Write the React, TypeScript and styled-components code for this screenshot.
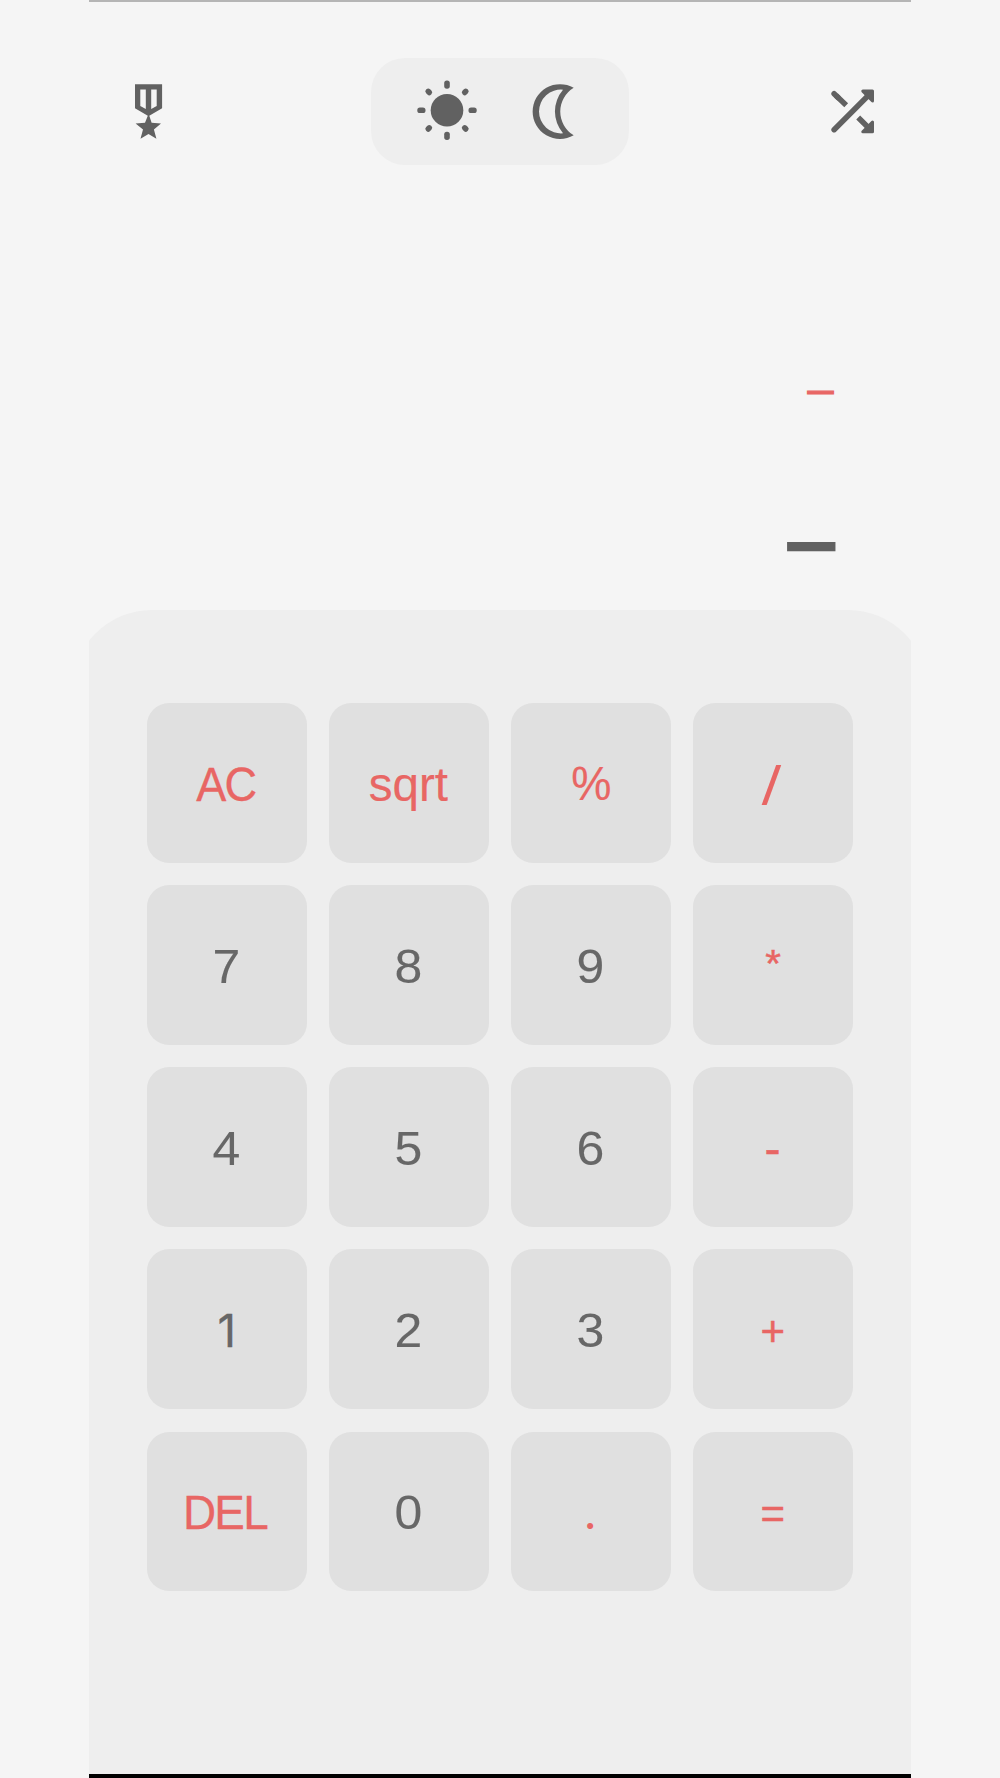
import React from "react";
import styled, { createGlobalStyle } from "styled-components";

const ink = "#616161";
const accent = "#e86664";

const GlobalStyle = createGlobalStyle`
  * { box-sizing: border-box; }
  body {
    margin: 0;
    background: #f5f5f5;
    font-family: "Liberation Sans", Arial, sans-serif;
  }
`;

const Phone = styled.main`
  width: 821.4px;
  height: 1778px;
  margin: 0 auto;
  display: flex;
  flex-direction: column;
  overflow: hidden;
  border-top: 2px solid #b5b5b5;
  border-bottom: 4px solid #000;
`;

const TopBar = styled.header`
  height: 163px;
  padding: 56px 35.9px 0 45.7px;
  display: flex;
  align-items: flex-start;
  justify-content: space-between;
`;

const IconButton = styled.button`
  border: 0;
  padding: 26px 0 0;
  background: none;
  display: flex;
`;

const ThemeSwitch = styled.div`
  width: 258px;
  height: 107px;
  margin-left: 6.2px;
  padding: 22px 44.6px 0 46px;
  border-radius: 34px;
  background: #eeeeee;
  display: flex;
  justify-content: space-between;
`;

const Icon = styled.svg`
  display: block;
  fill: ${ink};
`;

const Display = styled.section`
  height: 445px;
  padding-right: 75.7px;
  display: flex;
  flex-direction: column;
  align-items: flex-end;
`;

const Expression = styled.div`
  height: 60px;
  margin: 174.9px 2px 0 0;
  font-size: 44.5px;
  line-height: 60px;
  color: ${accent};
  -webkit-text-stroke: 1.2px ${accent};
`;

const Result = styled.div`
  height: 90px;
  margin: 69.2px 3.4px 0 0;
  font-size: 73px;
  font-weight: 700;
  line-height: 90px;
  color: ${ink};
  -webkit-text-stroke: 6.4px ${ink};
`;

const Panel = styled.section`
  flex: 1;
  margin: 0 -17px;
  padding: 93.2px 74.9px 0;
  border-radius: 80px 80px 0 0;
  background: #eeeeee;
`;

const Keypad = styled.div`
  display: grid;
  grid-template-columns: repeat(4, 159.6px);
  grid-auto-rows: 159.6px;
  gap: 22.5px;
`;

const Key = styled.button<{ $accent: boolean }>`
  border: 0;
  padding: 3px 0 0;
  border-radius: 22px;
  background: #e0e0e0;
  color: ${(p) => (p.$accent ? accent : "#676767")};
  display: flex;
  align-items: center;
  justify-content: center;
`;

type LabelStyle = {
  size?: number;
  family?: string;
  track?: number;
  x?: number;
  y?: number;
  sx?: number;
  sy?: number;
  bold?: number;
};

const Label = styled.span<{ $s: LabelStyle }>`
  font-family: ${(p) => p.$s.family ?? '"Liberation Sans"'}, Arial, sans-serif;
  font-size: ${(p) => p.$s.size ?? 48}px;
  letter-spacing: ${(p) => p.$s.track ?? 0}px;
  margin-right: ${(p) => -(p.$s.track ?? 0)}px;
  line-height: 56px;
  -webkit-text-stroke: ${(p) => p.$s.bold ?? 0}px currentColor;
  transform: translate(${(p) => p.$s.x ?? 0}px, ${(p) => p.$s.y ?? 0}px)
    scale(${(p) => p.$s.sx ?? 1}, ${(p) => p.$s.sy ?? 1});
`;

const digit: LabelStyle = { sx: 1.04, x: -0.9, bold: 0.1 };

const keys: { text: string; accent?: boolean; s: LabelStyle }[] = [
  { text: "AC", accent: true, s: { track: -2, sx: 0.94, x: -0.6, y: 0.7, bold: 0.3 } },
  { text: "sqrt", accent: true, s: { x: -0.6, y: 0.5, sx: 0.99, bold: 0.2 } },
  { text: "%", accent: true, s: { sx: 0.94, y: 0.4, bold: 0.2 } },
  { text: "/", accent: true, s: { family: "Inter", size: 46, sx: 1.35, x: -1.8, y: -0.8 } },
  { text: "7", s: digit },
  { text: "8", s: digit },
  { text: "9", s: digit },
  { text: "*", accent: true, s: { size: 42, sx: 0.96, sy: 0.92, bold: 0.5, y: -2.5 } },
  { text: "4", s: digit },
  { text: "5", s: digit },
  { text: "6", s: digit },
  { text: "-", accent: true, s: { x: -0.7, bold: 0.5 } },
  { text: "1", s: { family: "Inter", size: 45.5, x: -0.2, bold: 0.3 } },
  { text: "2", s: digit },
  { text: "3", s: digit },
  { text: "+", accent: true, s: { size: 42, bold: 0.5, x: -0.5, y: 1 } },
  { text: "DEL", accent: true, s: { track: -1.8, sx: 0.955, x: -1, y: 0.2, bold: 0.3 } },
  { text: "0", s: digit },
  { text: ".", accent: true, s: { family: "Lato", x: -1, y: -2.4 } },
  { text: "=", accent: true, s: { size: 42, bold: 0.5, x: -0.5, y: 1 } },
];

const MedalIcon = () => (
  <Icon width="28" height="56" viewBox="135 84 28 56">
    <path
      fillRule="evenodd"
      d="M135 84.3H162.1V108.3L149.3 115.8L151.6 122.8L161 123.6L153.9 129.6L156.4 138.7L148.5 134L140.5 138.7L143 129.6L135.6 123.6L145 122.8L147.8 115.8L135 108.3ZM140.3 89.5V106L145.8 109V89.5ZM151.2 89.5V109L156.7 106V89.5Z"
    />
  </Icon>
);

const SunIcon = () => (
  <Icon width="60" height="60" viewBox="417 80 60 60">
    <circle cx="447" cy="110.2" r="16.3" />
    {[0, 45, 90, 135, 180, 225, 270, 315].map((a) => (
      <rect
        key={a}
        x="444.2"
        y={a % 90 ? 80.9 : 80.5}
        width="5.6"
        height={a % 90 ? 7 : 8.2}
        rx="2.6"
        transform={`rotate(${a} 447 110.2)`}
      />
    ))}
  </Icon>
);

const MoonIcon = () => (
  <Icon width="52" height="60" viewBox="531 80 52 60">
    <path
      fillRule="evenodd"
      d="M572.7 87.8A27.4 27.4 0 1 0 572.7 135.3A27.7 27.7 0 0 1 572.7 87.8ZM562 89.7A33.5 33.5 0 0 0 562 133.3A21.9 21.9 0 1 1 562 89.7Z"
    />
  </Icon>
);

const ShuffleIcon = () => (
  <Icon width="44" height="56" viewBox="831 84 44 56">
    <g fill="none" stroke={ink} strokeWidth="5.5">
      <path strokeLinecap="round" d="M834.1 129.7L868 95.8" />
      <path strokeLinecap="round" d="M834.1 93.7L838 97.5" />
      <path d="M836 95.5L846.2 105.2M858.2 117.5L868 127.3" />
    </g>
    <g stroke={ink} strokeWidth="3" strokeLinejoin="round">
      <path d="M862.8 91.1H872.5V100.9Z" />
      <path d="M872.5 122.1V131.8H862.8Z" />
    </g>
  </Icon>
);

export default function App() {
  return (
    <>
      <GlobalStyle />
      <Phone>
        <TopBar>
          <IconButton aria-label="Awards">
            <MedalIcon />
          </IconButton>
          <ThemeSwitch>
            <SunIcon />
            <MoonIcon />
          </ThemeSwitch>
          <IconButton aria-label="Shuffle">
            <ShuffleIcon />
          </IconButton>
        </TopBar>
        <Display>
          <Expression>_</Expression>
          <Result>_</Result>
        </Display>
        <Panel>
          <Keypad>
            {keys.map((k) => (
              <Key key={k.text} $accent={!!k.accent}>
                <Label $s={k.s}>{k.text}</Label>
              </Key>
            ))}
          </Keypad>
        </Panel>
      </Phone>
    </>
  );
}
